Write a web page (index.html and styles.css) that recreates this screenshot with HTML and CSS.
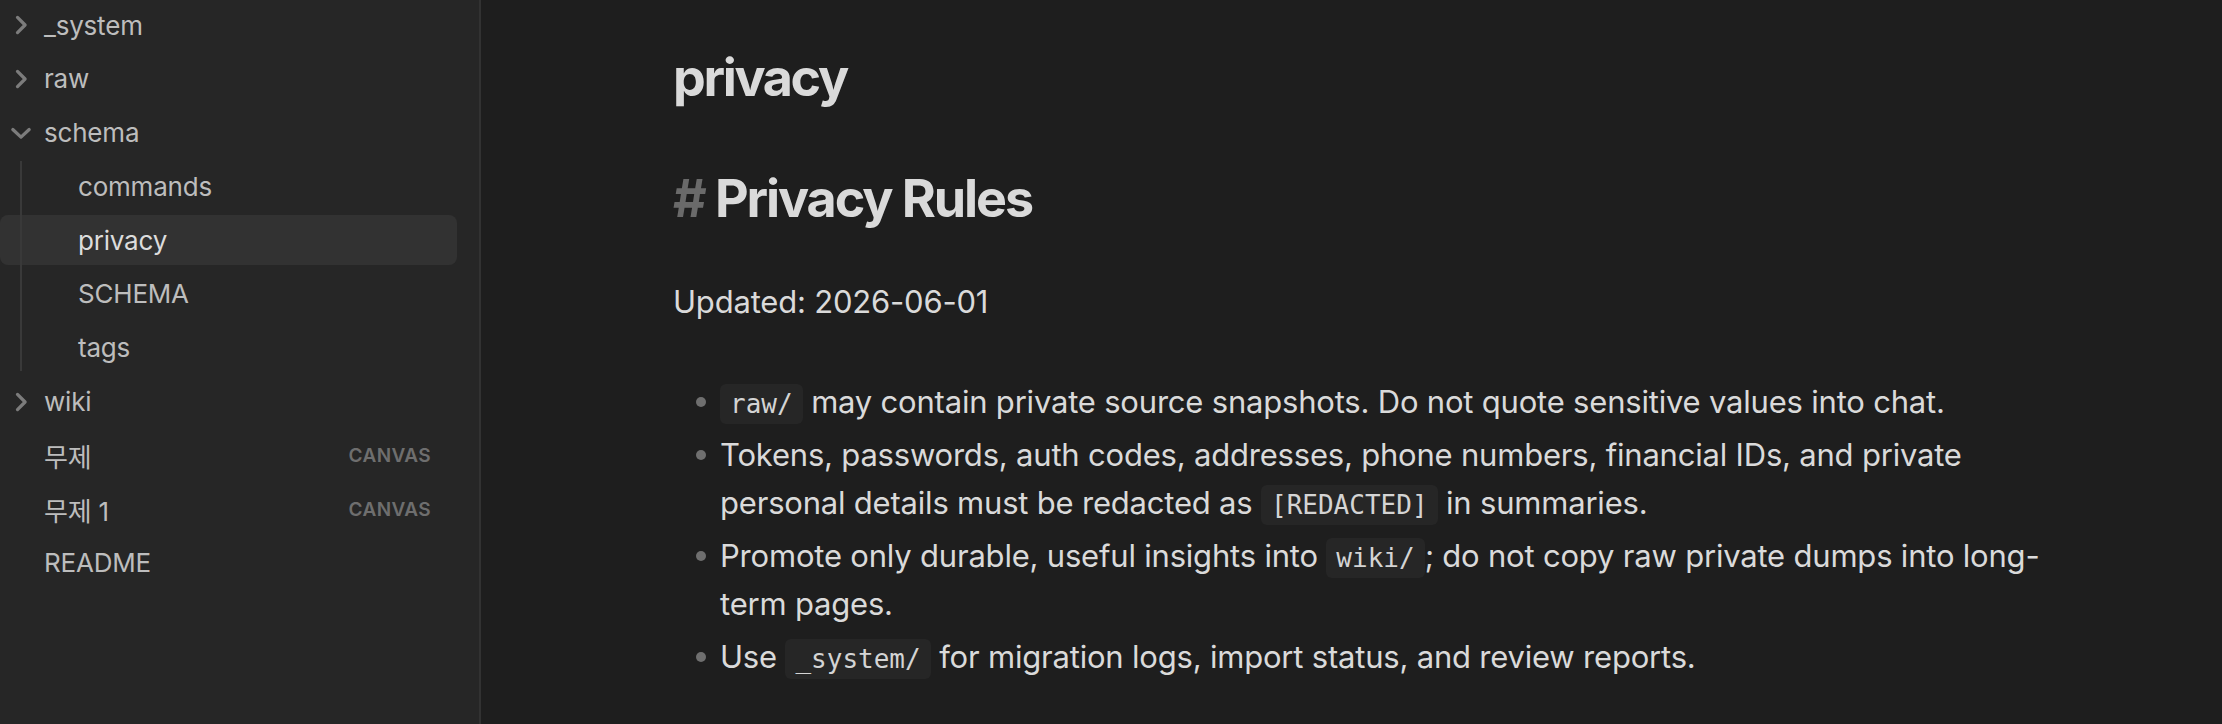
FILE: index.html
```html
<!DOCTYPE html>
<html lang="ko">
<head>
<meta charset="utf-8">
<title>privacy</title>
<link rel="stylesheet" href="styles.css">
</head>
<body>
<div class="app">
  <nav class="sidebar">
    <div class="tree">
      <div class="row folder">
        <svg class="chev" viewBox="0 0 24 24"><path d="M9 5.5l6.5 6.5-6.5 6.5"/></svg>
        <span class="name">_system</span>
      </div>
      <div class="row folder">
        <svg class="chev" viewBox="0 0 24 24"><path d="M9 5.5l6.5 6.5-6.5 6.5"/></svg>
        <span class="name">raw</span>
      </div>
      <div class="row folder">
        <svg class="chev open" viewBox="0 0 24 24"><path d="M5 9l7 6.5 7-6.5"/></svg>
        <span class="name">schema</span>
      </div>
      <div class="children">
        <div class="row file nested"><span class="name">commands</span></div>
        <div class="row file nested active"><span class="name">privacy</span></div>
        <div class="row file nested"><span class="name">SCHEMA</span></div>
        <div class="row file nested"><span class="name">tags</span></div>
      </div>
      <div class="row folder">
        <svg class="chev" viewBox="0 0 24 24"><path d="M9 5.5l6.5 6.5-6.5 6.5"/></svg>
        <span class="name">wiki</span>
      </div>
      <div class="row file"><span class="name">무제</span><span class="tag">CANVAS</span></div>
      <div class="row file"><span class="name">무제 1</span><span class="tag">CANVAS</span></div>
      <div class="row file"><span class="name">README</span></div>
    </div>
  </nav>
  <main class="main">
    <div class="doc">
      <div class="title">privacy</div>
      <h1 class="h1"><span class="hash">#</span> Privacy Rules</h1>
      <p class="para">Updated: 2026-06-01</p>
      <ul class="list">
        <li><code>raw/</code> may contain private source snapshots. Do not quote sensitive values into chat.</li>
        <li>Tokens, passwords, auth codes, addresses, phone numbers, financial IDs, and private personal details must be redacted as <code>[REDACTED]</code> in summaries.</li>
        <li>Promote only durable, useful insights into <code>wiki/</code>; do not copy raw private dumps into long-term pages.</li>
        <li>Use <code>_system/</code> for migration logs, import status, and review reports.</li>
      </ul>
    </div>
  </main>
</div>
</body>
</html>
```
FILE: styles.css
```css
* { box-sizing: border-box; }
html, body { margin: 0; padding: 0; }
body {
  background: #1e1e1e;
  font-family: Inter, "Noto Sans CJK KR", sans-serif;
  color: #dadada;
  overflow: hidden;
}
.app {
  display: flex;
  height: 724px;
}
.sidebar {
  flex: none;
  width: 481px;
  background: #262626;
  border-right: 2px solid #323232;
}
.tree {
  width: 457px;
  display: flex;
  flex-direction: column;
  gap: 3.8px;
}
.row {
  height: 50px;
  display: flex;
  align-items: center;
  border-radius: 8px;
  font-size: 26px;
  letter-spacing: -0.2px;
  color: #bdbdbd;
  padding-right: 26px;
}
.row.folder { padding-left: 7px; }
.row.file { padding-left: 44px; }
.row.nested { padding-left: 78px; }
.row.active {
  background: #323232;
  color: #dcdcdc;
}
.chev {
  flex: none;
  width: 28px;
  height: 28px;
  margin-right: 9px;
  fill: none;
  stroke: #7c7c7c;
  stroke-width: 2.8;
  stroke-linecap: round;
  stroke-linejoin: round;
}
.name { flex: 1; white-space: nowrap; }
.tag {
  flex: none;
  font-size: 19px;
  font-weight: 600;
  letter-spacing: 0.02em;
  color: #6e6e6e;
}
.children {
  position: relative;
  display: flex;
  flex-direction: column;
  gap: 3.8px;
}
.children::before {
  content: "";
  position: absolute;
  left: 20px;
  top: 0;
  bottom: 2px;
  width: 2px;
  background: #393939;
}
.main {
  flex: 1;
  padding: 47px 0 0 192px;
}
.doc {
  width: 1390px;
}
.title {
  font-size: 52px;
  line-height: 62px;
  font-weight: 700;
  letter-spacing: -0.045em;
  color: #dadada;
}
.h1 {
  margin: 59px 0 0;
  font-size: 52px;
  line-height: 62px;
  font-weight: 700;
  letter-spacing: -0.04em;
  color: #dadada;
}
.hash { color: #6a6a6a; }
.para {
  margin: 48px 0 0;
  font-size: 31px;
  line-height: 48px;
  letter-spacing: -0.2px;
}
.list {
  margin: 52px 0 0;
  padding: 0 0 0 47px;
  list-style: none;
  font-size: 31px;
  line-height: 48px;
  letter-spacing: -0.2px;
}
.list li {
  position: relative;
  margin-bottom: 5px;
}
.list li::before {
  content: "";
  position: absolute;
  left: -24px;
  top: 19px;
  width: 10px;
  height: 10px;
  border-radius: 50%;
  background: #6f6f6f;
}
code {
  font-family: "DejaVu Sans Mono", monospace;
  font-size: 26px;
  line-height: 1;
  letter-spacing: 0;
  background: #262626;
  color: #d4d4d4;
  padding: 5px 10px;
  border-radius: 6px;
}
```
